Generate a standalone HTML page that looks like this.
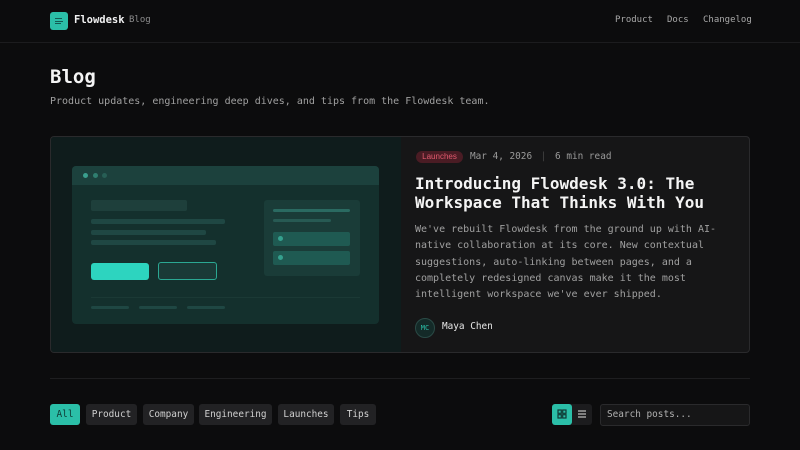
<!DOCTYPE html>
<html><head><meta charset="utf-8"><style>
*{margin:0;padding:0;box-sizing:border-box}
body{width:800px;height:450px;background:#0c0c0d;font-family:"DejaVu Sans Mono","Liberation Mono",monospace;color:#e8e8e8;position:relative;overflow:hidden}
.a{position:absolute;white-space:nowrap}
.nav{font-size:9px;color:#a8a8a8;top:15px}
.tab{position:absolute;top:404px;height:21px;border-radius:3px;background:#222224;color:#d0d0d0;font-size:9.4px;line-height:21px;text-align:center}
.b{position:absolute;background:#1f4743;border-radius:2px}
</style></head><body>
<div class="a" style="left:50px;top:12px;width:18px;height:18px;background:#2bbfa8;border-radius:3px"></div>
<div class="a" style="left:55px;top:18px;width:7px;height:1.2px;background:#135a52"></div>
<div class="a" style="left:55px;top:20.5px;width:8px;height:1.2px;background:#135a52"></div>
<div class="a" style="left:55px;top:23px;width:6px;height:1.2px;background:#135a52"></div>
<div class="a" style="left:74px;top:14px;font-size:10.5px;font-weight:bold;color:#f2f2f2">Flowdesk</div>
<div class="a" style="left:129px;top:15px;font-size:9px;color:#8c8c8c">Blog</div>
<div class="a nav" style="left:615px">Product</div>
<div class="a nav" style="left:667px">Docs</div>
<div class="a nav" style="left:703px">Changelog</div>
<div class="a" style="left:0;top:42px;width:800px;height:1px;background:#1c1c1e"></div>
<div class="a" style="left:50px;top:66px;font-size:19px;font-weight:bold;color:#f4f4f4">Blog</div>
<div class="a" style="left:50px;top:96px;font-size:10px;color:#a0a0a0">Product updates, engineering deep dives, and tips from the Flowdesk team.</div>

<div class="a" style="left:50px;top:136px;width:700px;height:217px;border:1px solid #2a2a2c;border-radius:4px;background:#161617;overflow:hidden">
 <div class="a" style="left:0;top:0;width:350px;height:217px;background:#0f1c1c">
  <div class="a" style="left:21px;top:29px;width:307px;height:158px;background:#14302d;border-radius:4px;overflow:hidden">
   <div class="a" style="left:0;top:0;width:307px;height:19px;background:#1c413d"></div>
   <div class="a" style="left:11px;top:7px;width:5px;height:5px;border-radius:50%;background:#3a9f8e"></div>
   <div class="a" style="left:21px;top:7px;width:5px;height:5px;border-radius:50%;background:#2f7e70"></div>
   <div class="a" style="left:30px;top:7px;width:5px;height:5px;border-radius:50%;background:#275e55"></div>
   <div class="b" style="left:19px;top:34px;width:96px;height:11px;background:#1e3f3b"></div>
   <div class="b" style="left:19px;top:53px;width:134px;height:5px"></div>
   <div class="b" style="left:19px;top:64px;width:115px;height:5px"></div>
   <div class="b" style="left:19px;top:74px;width:125px;height:5px"></div>
   <div class="a" style="left:19px;top:97px;width:58px;height:17px;background:#2dd4bf;border-radius:3px"></div>
   <div class="a" style="left:86px;top:96px;width:59px;height:18px;border:1px solid #2ba893;border-radius:3px;background:#1a3a37"></div>
   <div class="a" style="left:19px;top:131px;width:269px;height:1px;background:#1b3935"></div>
   <div class="b" style="left:19px;top:140px;width:38px;height:3px"></div>
   <div class="b" style="left:67px;top:140px;width:38px;height:3px"></div>
   <div class="b" style="left:115px;top:140px;width:38px;height:3px"></div>
   <div class="a" style="left:192px;top:34px;width:96px;height:76px;background:#1a3c38;border-radius:3px"></div>
   <div class="b" style="left:201px;top:43px;width:77px;height:3px;background:#2a6a61"></div>
   <div class="b" style="left:201px;top:53px;width:58px;height:3px;background:#275a53"></div>
   <div class="b" style="left:201px;top:66px;width:77px;height:14px;background:#1f5a52"></div>
   <div class="b" style="left:201px;top:85px;width:77px;height:14px;background:#1f5a52"></div>
   <div class="a" style="left:206px;top:70px;width:5px;height:5px;border-radius:50%;background:#35a08e"></div>
   <div class="a" style="left:206px;top:89px;width:5px;height:5px;border-radius:50%;background:#35a08e"></div>
  </div>
 </div>
 <div class="a" style="left:365px;top:14px;width:47px;height:12px;border-radius:6px;background:#4a1c24;color:#e05a6e;font-family:'Liberation Sans',sans-serif;font-size:8px;line-height:12px;text-align:center">Launches</div>
 <div class="a" style="left:419px;top:14px;font-size:9.4px;color:#9a9a9a">Mar 4, 2026 <span style="color:#444;margin:0 3px">|</span> 6 min read</div>
 <div class="a" style="left:364px;top:37px;font-size:16px;font-weight:bold;line-height:19px;color:#f4f4f4">Introducing Flowdesk 3.0: The<br>Workspace That Thinks With You</div>
 <div class="a" style="left:364px;top:85px;font-size:10px;line-height:16.3px;color:#a0a0a0">We've rebuilt Flowdesk from the ground up with AI-<br>native collaboration at its core. New contextual<br>suggestions, auto-linking between pages, and a<br>completely redesigned canvas make it the most<br>intelligent workspace we've ever shipped.</div>
 <div class="a" style="left:364px;top:181px;width:20px;height:20px;border-radius:50%;background:#142a28;border:1px solid #2a4a46;color:#2bbfa8;font-size:7px;line-height:18px;text-align:center">MC</div>
 <div class="a" style="left:391px;top:184px;font-size:9.4px;color:#e8e8e8">Maya Chen</div>
</div>

<div class="a" style="left:50px;top:378px;width:700px;height:1px;background:#1e1e20"></div>
<div class="tab" style="left:50px;width:30px;background:#2bbfa8;color:#0f3a35">All</div>
<div class="tab" style="left:86px;width:51px">Product</div>
<div class="tab" style="left:143px;width:51px">Company</div>
<div class="tab" style="left:199px;width:73px">Engineering</div>
<div class="tab" style="left:278px;width:56px">Launches</div>
<div class="tab" style="left:340px;width:36px">Tips</div>
<div class="a" style="left:552px;top:404px;width:40px;height:21px;background:#1c1c1e;border-radius:3px"></div>
<div class="a" style="left:552px;top:404px;width:20px;height:21px;background:#2bbfa8;border-radius:3px"></div>
<svg class="a" style="left:557px;top:409px" width="10" height="10" viewBox="0 0 10 10" fill="none" stroke="#0f3a35" stroke-width="1.2"><rect x="1" y="1" width="3.3" height="3.3"/><rect x="5.7" y="1" width="3.3" height="3.3"/><rect x="1" y="5.7" width="3.3" height="3.3"/><rect x="5.7" y="5.7" width="3.3" height="3.3"/></svg>
<svg class="a" style="left:577px;top:409px" width="10" height="10" viewBox="0 0 10 10" stroke="#bbb" stroke-width="1.2"><path d="M1 2H9M1 5H9M1 8H9"/></svg>
<div class="a" style="left:600px;top:404px;width:150px;height:22px;background:#161617;border:1px solid #2a2a2c;border-radius:3px;font-size:9.4px;color:#b0b0b0;padding-left:6px;line-height:20px">Search posts...</div>
</body></html>
